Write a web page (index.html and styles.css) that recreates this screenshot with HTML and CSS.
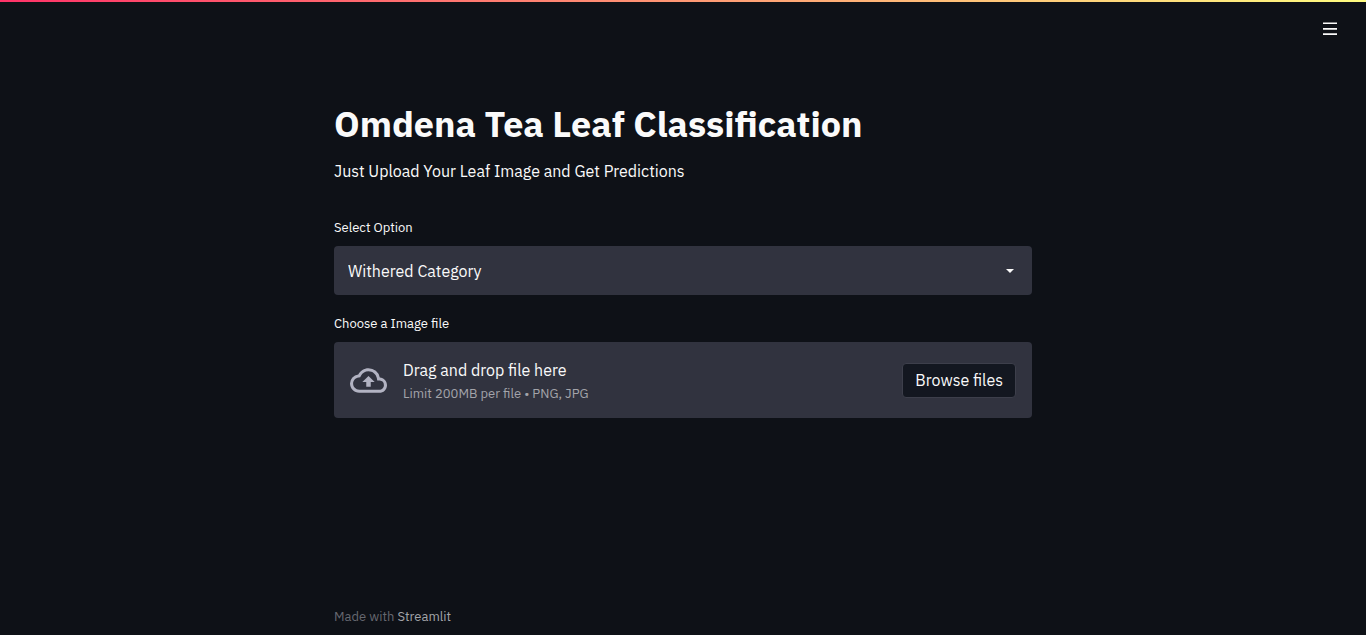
FILE: index.html
```html
<!DOCTYPE html>
<html lang="en">
<head>
<meta charset="utf-8">
<meta name="viewport" content="width=device-width, initial-scale=1">
<title>Omdena Tea Leaf Classification</title>
<link rel="stylesheet" href="styles.css">
</head>
<body>
<div class="decoration"></div>
<header class="toolbar">
  <button class="menu-button" type="button" aria-label="Menu">
    <svg viewBox="0 0 16 16" width="16" height="16"><path d="M1 1.4h14v1.6H1zM1 7h14v1.8H1zM1 12.2h14v1.8H1z" fill="currentColor"/></svg>
  </button>
</header>
<main class="content">
  <h1 class="title">Omdena Tea Leaf Classification</h1>
  <p class="intro">Just Upload Your Leaf Image and Get Predictions</p>
  <label class="label" for="category">Select Option</label>
  <div class="select-wrap">
    <select class="select" id="category"><option>Withered Category</option></select>
    <svg class="caret" viewBox="0 0 8 4" width="8" height="4"><path d="M0 0h8L4 4z" fill="currentColor"/></svg>
  </div>
  <div class="label" id="upload-label">Choose a Image file</div>
  <section class="dropzone" aria-labelledby="upload-label">
    <svg class="cloud" viewBox="0 0 24 24" width="37" height="37"><path d="M19.35 10.04A7.49 7.49 0 0 0 12 4C9.11 4 6.6 5.64 5.35 8.04A5.994 5.994 0 0 0 0 14c0 3.31 2.69 6 6 6h13c2.76 0 5-2.24 5-5 0-2.64-2.05-4.78-4.65-4.96zM19 18H6c-2.21 0-4-1.79-4-4 0-2.05 1.53-3.76 3.56-3.97l1.07-.11.5-.95A5.469 5.469 0 0 1 12 6c2.62 0 4.88 1.86 5.39 4.43l.3 1.5 1.53.11A2.98 2.98 0 0 1 22 15c0 1.65-1.35 3-3 3zM8 13h2.55v3h2.9v-3H16l-4-4z" fill="currentColor"/></svg>
    <div class="drop-text">
      <span class="drop-title">Drag and drop file here</span>
      <small class="drop-hint">Limit 200MB per file • PNG, JPG</small>
    </div>
    <button class="browse" type="button">Browse files</button>
  </section>
</main>
<footer class="footer">Made with <a class="footer-link" href="#">Streamlit</a></footer>
</body>
</html>
```
FILE: styles.css
```css
* { box-sizing: border-box; }
body {
  margin: 0;
  min-height: 100vh;
  display: flex;
  flex-direction: column;
  background: #0e1117;
  color: #fafafa;
  font: 16px/24px "IBM Plex Sans", "Noto Sans", sans-serif;
}
button, select { font: inherit; color: inherit; }
.decoration { height: 2px; background: linear-gradient(90deg, #ff3368, #fffd80); }
.toolbar { display: flex; justify-content: flex-end; padding: 15px 24px 0 0; }
.menu-button { display: flex; padding: 4px; border: 0; background: none; }
.content { width: 100%; max-width: 730px; margin: 0 auto; padding: 53px 16px 32px; flex: 1; }
.title { margin: 0; padding: 8px 0 13px; font-size: 36px; line-height: 44px; font-weight: 700; }
.intro { margin: 0 0 34px; }
.label { display: block; margin-bottom: 8px; font-size: 13px; line-height: 21px; }
.select-wrap { position: relative; margin-bottom: 18px; }
.select {
  display: block;
  width: 100%;
  height: 49px;
  padding: 0 40px 0 14px;
  appearance: none;
  border: 0;
  border-radius: 4px;
  background: #31333f;
}
.caret { position: absolute; right: 18px; top: 23px; pointer-events: none; }
.dropzone { display: flex; align-items: center; gap: 16px; padding: 12px 16px; border-radius: 4px; background: #31333f; }
.cloud { color: #b2b3c2; flex: none; }
.drop-text { display: flex; flex-direction: column; flex: 1; padding-top: 4px; }
.drop-hint { font-size: 13px; line-height: 24px; color: #a3a4aa; }
.browse { height: 35px; padding: 0 12px; border: 1px solid #3d3f4b; border-radius: 4px; background: #131720; }
.footer { width: 100%; max-width: 730px; margin: 0 auto; padding: 8px 16px; font-size: 13px; line-height: 21px; color: #666870; }
.footer-link { color: #a3a5a9; text-decoration: none; }
```
